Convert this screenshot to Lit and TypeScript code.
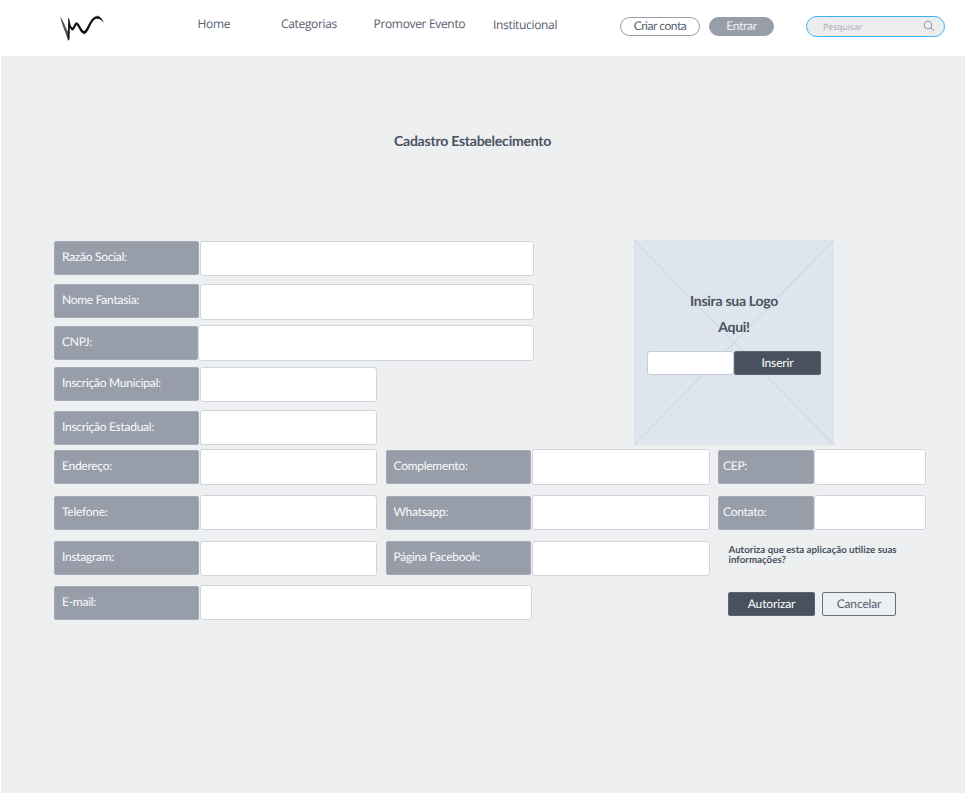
import { LitElement, html, css } from "lit";
import { customElement, property } from "lit/decorators.js";

@customElement("form-field")
class FormField extends LitElement {
  @property() label = "";

  static styles = css`
    :host { display: flex; height: 35px; box-sizing: border-box; }
    :host(.tall) { height: 36px; }
    :host(.low) { --drop: 1px; --line: 29px; }
    .label {
      box-sizing: border-box;
      flex: none;
      width: var(--label-width, 145px);
      height: 34px;
      margin-top: var(--drop, 0px);
      padding-left: calc(var(--label-pad, 8px) - 1px);
      border: 1px solid #a3abb6;
      border-radius: 2px;
      background: #979eaa;
      color: #fafbfc;
      font: 12px/var(--line, 30px) Lato, sans-serif;
      letter-spacing: -0.27px;
      white-space: nowrap;
    }
    .input {
      box-sizing: border-box;
      flex: 1;
      min-width: 0;
      height: 100%;
      margin-left: var(--gap, 1px);
      border: 1px solid #cfd4dd;
      border-radius: 3px;
      background: #fff;
    }
  `;

  render() {
    return html`<div class="label">${this.label}</div><div class="input"></div>`;
  }
}

@customElement("app-root")
class AppRoot extends LitElement {
  static styles = css`
    :host { display: block; width: 966px; height: 795px; background: #fff; color: #485360; font-family: Lato, sans-serif; text-rendering: geometricPrecision; overflow: hidden; }
    header { display: flex; align-items: flex-start; height: 56px; }
    .logo { flex: none; width: 48px; height: 30px; margin: 13px 0 0 58px; }
    nav { display: flex; margin-left: 91.5px; font: 12px/16px "Open Sans", sans-serif; letter-spacing: -0.33px; color: #556070; white-space: nowrap; }
    nav span { margin-top: 16px; flex: none; }
    .home { width: 83.5px; }
    .cat { width: 92.5px; }
    .promo { width: 119.5px; }
    .inst { width: 127px; }
    nav .inst { margin-top: 17.4px; }
    .pill { box-sizing: border-box; flex: none; height: 19px; margin-top: 17px; border-radius: 10px; font-size: 12px; line-height: 16px; letter-spacing: -0.3px; text-align: center; }
    .create { width: 80px; border: 1px solid #939caa; color: #536070; letter-spacing: -0.45px; }
    .enter { width: 65px; margin-left: 9px; border: 1px solid #979eaa; background: #979eaa; color: #f1f3f5; }
    .search { box-sizing: border-box; display: flex; justify-content: space-between; width: 139px; height: 21px; margin: 15.5px 0 0 32px; padding: 0 9px 0 16px; border: 1px solid #35b5f5; border-radius: 11px; background: #ededee; color: #a3a9b2; font: 8.6px/20px "Open Sans", sans-serif; }
    .search svg { width: 12px; height: 12px; margin-top: 3px; }
    main { box-sizing: border-box; height: 737px; margin: 0 1px; padding: 75px 0 0 53px; background: #eeeff1; }
    h1 { margin: 0; width: 837px; text-align: center; font-size: 14px; line-height: 19px; font-weight: 700; letter-spacing: -0.23px; }
    .top { display: flex; margin-top: 90px; height: 205px; }
    .identity { width: 480px; padding-top: 1px; margin-right: 100px; }
    .wide { width: 480px; }
    .half { width: 323px; }
    .cnpj { --label-width: 144px; --gap: 0px; }
    .g5 { margin-top: 5px; }
    .g6 { margin-top: 6px; }
    .g8 { margin-top: 8px; }
    .upload { display: grid; flex: none; width: 200px; height: 205px; }
    .upload > * { grid-area: 1 / 1; }
    .cross { width: 200px; height: 205px; }
    .panel { display: flex; flex-direction: column; align-items: center; }
    .title { margin-top: 48px; text-align: center; font-size: 14px; line-height: 26px; font-weight: 700; letter-spacing: -0.27px; }
    .picker { display: flex; width: 174px; height: 24px; margin-top: 11px; }
    .path { box-sizing: border-box; width: 87px; border: 1px solid #c3ccd8; border-radius: 3px; background: #fff; }
    .btn { box-sizing: border-box; width: 87px; height: 24px; border: 1px solid #5b6673; border-radius: 2px; background: #48525e; color: #fff; font-size: 12px; line-height: 22px; letter-spacing: -0.15px; text-align: center; }
    .rows { display: grid; grid-template-columns: 323px 324px 208px; column-gap: 8.5px; margin-top: 4px; }
    .rows .r1 { margin-bottom: 10px; }
    .rows .r2 { margin-bottom: 11px; }
    .side { --label-width: 96px; --label-pad: 5.5px; --gap: 0px; margin-left: -0.5px; }
    .ask { margin: 4px 0 0 10.5px; font-size: 9.72px; line-height: 10px; font-weight: 700; white-space: nowrap; }
    .bottom { display: flex; margin-top: 9px; }
    .email { width: 478px; }
    .bottom .btn { margin: 7px 0 0 196px; }
    .bottom .cancel { width: 74px; margin-left: 7px; border-color: #667180; background: transparent; color: #556070; }
  `;

  render() {
    return html`
      <header>
        <svg class="logo" viewBox="0 0 48 30">
          <path fill="#555" d="M2 3.5C5 7 7 13 9 17L11 27.5L9.8 27C8 20 5 15 2 3.5Z"/>
          <path fill="#111" d="M9 17L10 19L10.3 4.3L11.6 7C12 11 13 14 14.4 14.8C16 13.5 16.6 9 19 9.4C22 10.5 23 17 26.3 18C30 15.5 31 6.5 37.5 3.3C41.5 2 44 5.5 46 10C43 6.3 40.5 5.2 37.5 6C32.5 8.5 31 20 26.3 21C22 20.4 21 14 18.6 12C17.4 13 16.5 17.6 14.3 17.5C13 17 12.3 15.4 11.8 14.5L11.5 26L10.6 27.8C9.8 25 9.6 21 9 17Z"/>
          <path fill="none" stroke="#aaa" stroke-width=".6" d="M37 4L41 2"/>
        </svg>
        <nav>
          <span class="home">Home</span><span class="cat">Categorias</span><span class="promo">Promover Evento</span><span class="inst">Institucional</span>
        </nav>
        <div class="pill create">Criar conta</div>
        <div class="pill enter">Entrar</div>
        <div class="search">
          <span>Pesquisar</span>
          <svg viewBox="0 0 12 12" fill="none" stroke="#959eaa" stroke-width="1.1"><circle cx="5" cy="5" r="3.7"/><path d="M7.8 7.8L10.8 10.6"/></svg>
        </div>
      </header>
      <main>
        <h1>Cadastro Estabelecimento</h1>
        <section class="top">
          <div class="identity">
            <form-field class="wide" label="Razão Social:"></form-field>
            <form-field class="wide tall g8" label="Nome Fantasia:"></form-field>
            <form-field class="wide tall low cnpj g5" label="CNPJ:"></form-field>
            <form-field class="half g6" label="Inscrição Municipal:"></form-field>
            <form-field class="half low g8" label="Inscrição Estadual:"></form-field>
          </div>
          <div class="upload">
            <svg class="cross" viewBox="0 0 200 205"><rect width="200" height="205" fill="#dfe5ed"/><path d="M0 0L200 205M200 0L0 205" stroke="#c9d2df"/></svg>
            <div class="panel">
              <div class="title">Insira sua Logo<br />Aqui!</div>
              <div class="picker"><div class="path"></div><div class="btn">Inserir</div></div>
            </div>
          </div>
        </section>
        <section class="rows">
          <form-field class="tall low r1" label="Endereço:"></form-field>
          <form-field class="tall low r1" label="Complemento:"></form-field>
          <form-field class="tall low r1 side" label="CEP:"></form-field>
          <form-field class="low r2" label="Telefone:"></form-field>
          <form-field class="low r2" label="Whatsapp:"></form-field>
          <form-field class="low r2 side" label="Contato:"></form-field>
          <form-field label="Instagram:"></form-field>
          <form-field label="Página Facebook:"></form-field>
          <div class="ask">Autoriza que esta aplicação utilize suas<br />informações?</div>
        </section>
        <section class="bottom">
          <form-field class="email low" label="E-mail:"></form-field>
          <div class="btn">Autorizar</div>
          <div class="btn cancel">Cancelar</div>
        </section>
      </main>
    `;
  }
}
